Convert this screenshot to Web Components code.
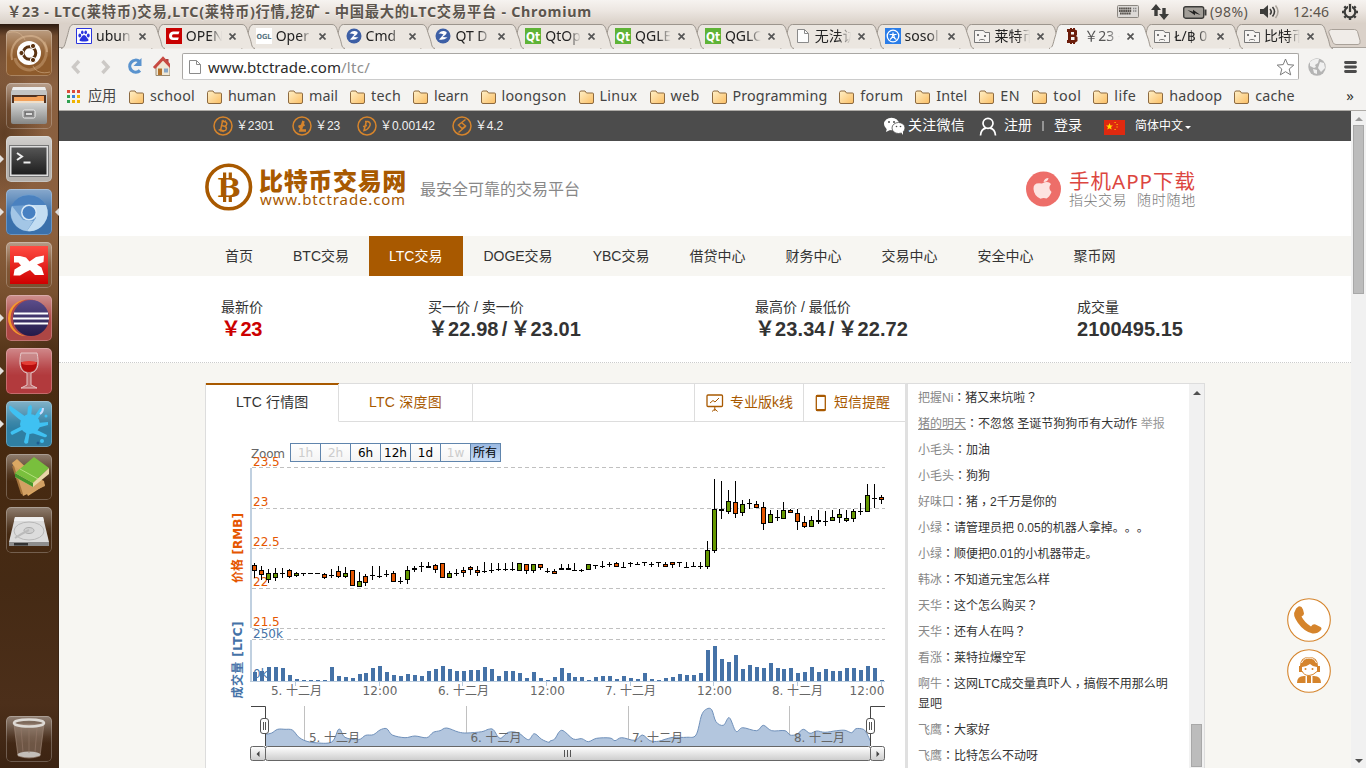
<!DOCTYPE html>
<html lang="zh-CN">
<head>
<meta charset="utf-8">
<title>LTC(莱特币)交易</title>
<style>
html,body{margin:0;height:100%;overflow:hidden}
body{font-family:"Liberation Sans","Noto Sans CJK SC",sans-serif;font-size:14px;color:#333;text-spacing-trim:space-all}
</style>
</head>
<body>
<desktop-shell></desktop-shell>
<script>
class Base extends HTMLElement{
  constructor(){super();this.attachShadow({mode:'open'});}
  connectedCallback(){
    this.shadowRoot.innerHTML='<style>*{box-sizing:border-box}svg{display:block;flex:none}:host{display:block;box-sizing:border-box}'+this.css()+'</style>'+this.html();
    this.ready();
  }
  css(){return ''} html(){return '<slot></slot>'} ready(){}
}
const UI='font-family:"Noto Sans","Noto Sans CJK SC",sans-serif;';

/* Text that spreads its letters over a given width: <fit-text w="90"> */
class FitText extends Base{
  css(){return ':host{display:inline-block;white-space:pre;flex:none;width:'+this.getAttribute('w')+'px}span{display:inline-block;white-space:pre}'}
  html(){return '<span><slot></slot></span>'}
  ready(){
    const s=this.shadowRoot.querySelector('span'),n=[...this.textContent].length,w=+this.getAttribute('w');
    s.style.letterSpacing=((w-s.getBoundingClientRect().width)/n).toFixed(3)+'px';
  }
}
customElements.define('fit-text',FitText);

/* ---------- desktop panel ---------- */
class TopPanel extends Base{
  css(){return `:host{height:24px;display:flex;align-items:center;background:linear-gradient(#f6f3f0,#ece6e1 45%,#d9d0c7);color:#5c554d;${UI}line-height:24px;padding:0 8px 0 7px}
  .t{font-weight:700;font-size:14.3px;flex:1;text-shadow:0 1px #fff8}.r{font-size:14px}svg{position:relative}`}
  html(){return `<div class="t"><fit-text w="585">￥23 - LTC(莱特币)交易,LTC(莱特币)行情,挖矿 - 中国最大的LTC交易平台 - Chromium</fit-text></div>
  <svg width="22" height="14" style="margin-right:12px"><rect x=".5" y=".5" width="21" height="12" rx="1" fill="#dcd9d6" stroke="#8b8781"/><path d="M2 3.500h12.500M2 6h12.500M3 8.500h11" stroke="#56524d" stroke-width="2" stroke-dasharray="1.7 .4"/><path d="M16 3.500h4M16 6h4" stroke="#888" stroke-width="1.700" stroke-dasharray="1.2 .6"/></svg>
  <svg width="18" height="18" style="margin-right:14px" fill="#3c3c3a"><path d="M5 1l5 6H6.700v6H3.300V7H0zM13 17l-5-6h3.300V5h3.400v6H18z"/></svg>
  <svg width="24" height="13" style="margin-right:3px"><rect x=".7" y=".7" width="20" height="11.500" rx="2" fill="#a29e98" stroke="#3c3c3a" stroke-width="1.400"/><path d="M21.500 3.500h2v6h-2z" fill="#3c3c3a"/><path d="M4.500 4l5.500 1.700V3.800L17.500 9l-5.500-1.700v1.900z" fill="#222"/></svg>
  <fit-text class="r" w="38">(98%)</fit-text>
  <svg width="20" height="16" style="margin:0 13px 0 12px"><path d="M0 5h3.500L8 1v13L3.500 10H0z" fill="#3c3c3a"/><path d="M10 5q2.500 2.800 0 5.500M12.500 3q4 4.500 0 9.500" fill="none" stroke="#3c3c3a" stroke-width="1.600"/><path d="M15.500 1.500q5 6 0 12.500" fill="none" stroke="#aaa49c" stroke-width="1.600"/></svg>
  <fit-text class="r" w="36">12:46</fit-text>
  <svg width="18" height="18" style="margin:0 -1px 0 12px" viewBox="-9 -9 18 18"><circle r="5.300" fill="none" stroke="#3c3c3a" stroke-width="2.200"/><path d="M5 0H8M-5 0H-8M0 5V8M3.500 3.500l2.200 2.200M-3.500 3.500l-2.200 2.200M3.700-3.700l2-2M-3.700-3.700l-2-2" stroke="#3c3c3a" stroke-width="2.400"/><path d="M-2-9h4V1h-4z" fill="#e6e0d9"/><path d="M0-8V0" stroke="#3c3c3a" stroke-width="2.200"/></svg>`}
}
customElements.define('top-panel',TopPanel);

/* ---------- launcher ---------- */
const LICONS={
dash:`<path d="M6 30C3 15 13 5 26 6c10 1 15 10 15 16" fill="none" stroke="#e0bd99" stroke-width="2" opacity=".55"/><path d="M38 12c6 12 0 26-14 28-8 0-14-6-15-12" fill="none" stroke="#dab48d" stroke-width="3" opacity=".4"/><path d="M2 3c7-3 14 0 17 7M44 42c-8 2-14 0-17-6" fill="none" stroke="#e0bd99" opacity=".5"/><circle cx="23" cy="23" r="12" fill="#fff"/><circle cx="23.500" cy="23" r="6.300" fill="none" stroke="#5b3413" stroke-width="3"/><g fill="#5b3413" stroke="#fff" stroke-width="1"><circle cx="15.500" cy="23" r="2.600"/><circle cx="27" cy="16" r="2.600"/><circle cx="27" cy="30" r="2.600"/></g>`,
files:`<path d="M7 4h32l2 5v14H5V9z" fill="#c3c4c3"/><path d="M7 4h32l1 3H6z" fill="#eee"/><path d="M6 12h34v9H6z" fill="#503221"/><path d="M8 14h22l2-1h6v8H8z" fill="#f3a15a"/><path d="M8 18h30v3H8z" fill="#f0dfc9"/><path d="M5 20h36v19q0 2-2 2H7q-2 0-2-2z" fill="url(#gm)"/><rect x="17" y="27" width="12" height="8" rx="1.500" fill="#888" stroke="#eee"/><rect x="19.500" y="29.500" width="7" height="3" fill="#ddd" stroke="#666" stroke-width=".7"/>`,
term:`<rect x="3.500" y="9.500" width="39" height="31" fill="#ddd" stroke="#777"/><rect x="5.500" y="11.500" width="35" height="27" fill="url(#gk)"/><path d="M11 17l5 3.500-5 3.500" fill="none" stroke="#eee" stroke-width="2"/><path d="M17.500 26.500h7" stroke="#eee" stroke-width="2"/>`,
chromium:`<circle cx="23" cy="24" r="18.500" fill="#6f9fd0"/><path d="M23 16h17a18.500 18.500 0 0 1-19 26l9-13z" fill="#c3ddf2"/><path d="M6 17a18.500 18.500 0 0 0 15 25l6-10-10-1z" fill="#a3c6e6"/><path d="M5 17a20 20 0 0 1 35-1H23z" fill="#4a81bf"/><circle cx="23" cy="23.500" r="8" fill="#d8e9f7"/><circle cx="23" cy="23.500" r="6.500" fill="#4780c2"/>`,
xmind:`<path d="M4 4h38v38H4z" fill="url(#gr)"/><path d="M8 14h6l6 1.500 3.500 4L30 15l8-1.500-.5 6.500-6.500 2.500 4.500 3L38 33h-9l-5-5-5 2.500-5 3H7.500l1-6 6.500-4-2.500-3H8z" fill="#fff"/>`,
eclipse:`<circle cx="20" cy="23" r="18" fill="#f79a2a"/><circle cx="23" cy="23" r="18.500" fill="#b5494a"/><circle cx="25" cy="23" r="18" fill="url(#gv)"/><path d="M8 18.500h34M7 23.500h36M8 28.500h34" stroke="#fff" stroke-width="2"/>`,
wine:`<path d="M15 5h16c2 9 2 18-6 20v12l6 3H15l6-3V25c-8-2-8-11-6-20z" fill="#cda0a0" fill-opacity=".5" stroke="#e6c7c7"/><path d="M15 14q8 4 16 0c0 6-2 10-8 10s-8-4-8-10z" fill="#b50d0d"/><ellipse cx="23" cy="15" rx="7.500" ry="2" fill="#e33c34"/>`,
splash:`<g fill="#3fc1f2"><circle cx="24" cy="23" r="10"/><path d="M20 16L6 6q-3-3-3 1 0 4 14 14zM21 16l1-10q3-4 4 0l-1 10zM28 16l6-9q4-1 3 3l-6 9zM31 22l11-1v3l-11 3zM29 28l12 6q0 3-3 2L26 32zM24 30l-2 12q-3 2-4-1l3-12zM18 28L6 34q-3-3 0-4l10-5z"/><circle cx="40" cy="15" r="1.500"/><circle cx="36" cy="40" r="2"/></g><path d="M34 13q3-2 3-6" stroke="#cdf" stroke-width="2" fill="none"/><circle cx="32" cy="42" r="1.500" fill="#1d5d92"/>`,
books:`<path d="M6 9l5-4 28 26-17 11z" fill="#dba863"/><path d="M7 12l10 30 22-10-1-5z" fill="#d2a063"/><path d="M7 12l9 28" stroke="#a4733c" stroke-width="2"/><path d="M28 3l15 11-16 15L9 19z" fill="#79bf3d"/><path d="M9 19l18 10 16-15v6L27 33 9 23z" fill="#ead7a6"/><path d="M9 19l18 10v4L9 23z" fill="#45962a"/><path d="M14 15l18 10" stroke="#b3e07c"/>`,
disk:`<path d="M9 10h28l6 25H3z" fill="#dcdcdc"/><path d="M9 10h28l1 4H8z" fill="#eee"/><ellipse cx="23" cy="24" rx="15" ry="9" fill="none" stroke="#b8b8b8"/><ellipse cx="23" cy="23.500" rx="5" ry="3" fill="#d0d0d0" stroke="#aaa"/><path d="M9 31q6-4 14-8" stroke="#bbb" fill="none" stroke-width="2"/><path d="M3 35h40v4H3z" fill="#8e8e8e"/><path d="M8 36h14v2.500H8z" fill="#333"/>`,
trash:`<path d="M8 8l4 32q11 4 22 0l4-32z" fill="#c4aea0" fill-opacity=".35" stroke="#a28b7c" stroke-width=".6"/><ellipse cx="23" cy="7" rx="15" ry="3.500" fill="none" stroke="#dedad5" stroke-width="2.500"/><ellipse cx="23" cy="38.500" rx="11.500" ry="3" fill="#c4bfba"/><path d="M15 12l2 24M23 12v25M31 12l-2 24" stroke="#96796a" stroke-width=".6"/>`
};
class LauncherIcon extends Base{
  css(){return `:host{width:46px;height:46px;border-radius:5px;position:relative;background:linear-gradient(#fff6,#fff1 45%,#0000 60%),${this.getAttribute('bg')||'#0000'};box-shadow:inset 0 0 0 1px #ffffff40}
  i{position:absolute;top:19px;border:4px solid transparent}.l{left:-6px;border-left-color:#e4e0dc;border-right:0}.r{right:-7px;border-right-color:#ddd;border-left:0}`}
  html(){return `<svg width="46" height="46"><defs><linearGradient id="gm" x2="0" y2="1"><stop stop-color="#d4d5d4"/><stop offset="1" stop-color="#868786"/></linearGradient><linearGradient id="gk" x2="0" y2="1"><stop stop-color="#555"/><stop offset="1" stop-color="#1e1e1e"/></linearGradient><linearGradient id="gr" x2="0" y2="1"><stop stop-color="#ff4c42"/><stop offset="1" stop-color="#cf0000"/></linearGradient><linearGradient id="gv" x2="0" y2="1"><stop stop-color="#5b4d8a"/><stop offset="1" stop-color="#231a49"/></linearGradient></defs>${LICONS[this.getAttribute('kind')]}</svg>${this.hasAttribute('run')?'<i class="l"></i>':''}${this.hasAttribute('focus')?'<i class="r"></i>':''}`}
}
customElements.define('launcher-icon',LauncherIcon);
class LauncherBar extends Base{
  css(){return `:host{width:59px;display:flex;flex-direction:column;align-items:flex-start;gap:7px;padding:6px 0 6px 6px;border-right:1px solid #3a2515;
  background:radial-gradient(ellipse 40px 70px at 4px 110px,#3a220f88,#0000),radial-gradient(ellipse 30px 60px at 50px 330px,#3a220f66,#0000),linear-gradient(#2c1b10,#6f4a2e 12px,#8a6040 60px,#8b5f3d 210px,#78502f 270px,#553519 330px,#47290f 390px,#452a14 560px,#4c2f1a 680px,#3b2312)}
  launcher-icon:last-child{margin-top:auto}`}
  html(){return `<launcher-icon kind="dash" bg="#8e5b2c"></launcher-icon><launcher-icon kind="files"></launcher-icon><launcher-icon kind="term" bg="#b5b2ae" run></launcher-icon><launcher-icon kind="chromium" bg="#3a70ab" run focus></launcher-icon><launcher-icon kind="xmind"></launcher-icon><launcher-icon kind="eclipse" bg="#ad4644" run></launcher-icon><launcher-icon kind="wine" bg="#b23a3d" run></launcher-icon><launcher-icon kind="splash" bg="#2f7fa3" run></launcher-icon><launcher-icon kind="books"></launcher-icon><launcher-icon kind="disk"></launcher-icon><launcher-icon kind="trash"></launcher-icon>`}
}
customElements.define('launcher-bar',LauncherBar);

/* ---------- browser chrome ---------- */
const bt='font-family="DejaVu Sans" font-weight="bold"';
const FAV={
baidu:`<path d="M.5.5h15v15H.5z" fill="#fff" stroke="#2a35dd"/><g fill="#2a35dd"><ellipse cx="3.800" cy="7.500" rx="1.400" ry="1.900"/><ellipse cx="6.300" cy="4.300" rx="1.300" ry="1.900"/><ellipse cx="9.700" cy="4.300" rx="1.300" ry="1.900"/><ellipse cx="12.300" cy="7.500" rx="1.400" ry="1.900"/><path d="M8 7c2 0 2.500 2.500 4 4s0 3-4 2.500C4 14 2.500 12.500 4 11s2-4 4-4z"/></g>`,
csdn:`<path d="M0 0h16v16H0z" fill="#c80000"/><path d="M13.500 3.500H7Q3 4 3 8t4 4h5l.8-2.500H7.500Q6 9.500 6 8t1.500-1.800h5z" fill="#fff"/>`,
ogl:`<path d="M0 0h16v16H0z" fill="#fff"/><text x=".5" y="10.500" textLength="15" lengthAdjust="spacingAndGlyphs" font-size="7" ${bt} fill="#5b7784">OGL</text>`,
cn:`<circle cx="8" cy="8" r="7.500" fill="#3d5fa5"/><path d="M3.500 5.500q4-4 8-1.500 1 2-4 5 3 0 5 .5-4 3-8.500 2 1-1 4.500-5-2-1.200-5-1z" fill="#fff"/>`,
qt:`<path d="M0 0h16v16H0z" fill="#5fb336"/><text x="1" y="12.500" textLength="14" lengthAdjust="spacingAndGlyphs" font-size="12.500" ${bt} fill="#fff">Qt</text>`,
page:`<path d="M2.500 1.500h7l4 4v9h-11z" fill="#fdfdfd" stroke="#8a8a8a"/><path d="M9.500 1.500v4h4" fill="none" stroke="#8a8a8a"/>`,
soso:`<path d="M0 0h16v16H0z" fill="#2b7de8"/><circle cx="8" cy="8" r="5.800" fill="none" stroke="#fff" stroke-width="1.300"/><path d="M4.500 6.500h7M8 4.500v2q-.5 3.500-3 5M9 6.500q-.5 4 2.500 5M7 9.500h3" stroke="#fff" fill="none" stroke-width="1.200"/>`,
sad:`<path d="M.5 2.500h9l1.500 2h4.500v10H.5z" fill="#f6f4f2" stroke="#777"/><path d="M3 6l2 2m0-2L3 8M10 7l2 2m0-2l-2 2M5 12.500l1.500-1h3l1.500 1" stroke="#777" fill="none"/>`,
coin:`<path d="M3 1h3V0h2v1h1V0h2v1.500l2 1V7l-1 1 1.500 1v4l-2 1.500H11V16H9v-1H8v1H6v-1H3v-3h1V4H3zM7 4v2.500h3V4zM7 9v3h3.500V9z" fill="#6b1d0b" fill-rule="evenodd"/>`
};
class BrowserTab extends Base{
  css(){const a=this.hasAttribute('active');return `:host{width:89.85px;flex:none;position:relative;height:24px;${a?'z-index:30;':''}}
  .bg{position:absolute;left:0;top:0;overflow:visible}.in{position:relative;display:flex;align-items:center;height:24px;padding-left:15px}
  .t{margin-left:4px;width:36px;overflow:hidden;white-space:nowrap;${UI}font-size:14px;line-height:22px;color:${a?'#555':'#222'};-webkit-mask:linear-gradient(90deg,#000 65%,#0000);margin-right:7px}`}
  html(){const a=this.hasAttribute('active');return `<svg class="bg" width="104" height="25"><path d="M0 24.500C4 24 4 19 6 13S8 .5 12.500.5H91C96 .5 96 7 98.500 13S100 24 104 24.500" fill="${a?'#f4f3f1':'#ebe6e0'}" stroke="#9c958d"/>${a?'<path d="M1 24.500h102" stroke="#f4f3f1" stroke-width="2"/>':''}</svg>
  <div class="in"><svg width="16" height="16">${FAV[this.getAttribute('fav')]}</svg><div class="t"><slot></slot></div><svg width="7" height="7"><path d="M.5.500l6 6m0-6l-6 6" stroke="#555" stroke-width="1.700"/></svg></div>`}
}
customElements.define('browser-tab',BrowserTab);
class TabStrip extends Base{
  css(){return `:host{height:24px;display:flex;padding-left:2px;background:#dad1c9;border-bottom:1px solid #aaa49d}.new{margin:5px 0 0 9px}`}
  html(){const T=[['baidu','ubun'],['csdn','OPEN'],['ogl','Oper'],['cn','Cmd'],['cn','QT D'],['qt','QtOp'],['qt','QGLE'],['qt','QGLC'],['page','无法访'],['soso','sosol'],['sad','莱特币'],['coin','￥23 -'],['sad','Ł/฿ 0'],['sad','比特币']];
  return T.map((t,i)=>`<browser-tab fav="${t[0]}" style="z-index:${i==11?30:20-i}" ${i==11?'active':''}>${t[1]}</browser-tab>`).join('')+
  `<svg class="new" width="33" height="16"><path d="M3.500.5h23q2 0 3 2l2.500 9q1 4-2 4H8q-2 0-3-2L1 4q-1-3 2.500-3.500z" fill="#f0ece8" stroke="#a9a199"/></svg>`}
}
customElements.define('tab-strip',TabStrip);
class ToolBar extends Base{
  css(){return `:host{height:35px;background:#f4f3f1;display:flex;align-items:center;padding:2px 8px 0 11px;position:relative}
  .url{display:flex;flex:none;align-items:center;height:27px;width:1117px;background:#fff;border:1px solid #a9a7a4;border-bottom-color:#ccc;border-radius:2px;${UI}font-size:15px;line-height:24px;color:#2b2b2b;padding:0 3px 0 4px}
  .url div{flex:1;margin-left:5px}.g{color:#8e8e8e}`}
  html(){return `<svg width="100" height="24" style="margin:0 12px 0 0"><path d="M9 6L3.500 12 9 18M32.500 6L38 12l-5.500 6" fill="none" stroke="#ccc9c6" stroke-width="3.400"/><path d="M69.500 6.500a6 6 0 1 0 .5 9" fill="none" stroke="#5a93ce" stroke-width="3.200"/><path d="M71.500 3v8h-8z" fill="#5a93ce"/><path d="M86 11v9.500h14V11l-7-6z" fill="#efe7d6" stroke="#9b8b72"/><path d="M96 4h2.500v5H96z" fill="#a44"/><path d="M84 13l9-9.500 9 9.500" fill="none" stroke="#c84a42" stroke-width="3"/><path d="M88 13.500h4V20h-4z" fill="#b2722c"/><path d="M94 13.500h4v4h-4z" fill="#86a6c8"/></svg>
  <div class="url"><svg width="16" height="16">${FAV.page}</svg><div><fit-text w="133">www.btctrade.com</fit-text><fit-text class="g" w="29">/ltc/</fit-text></div><svg width="19" height="18"><path d="M9.500 1l2.300 5.600 6 .5-4.600 3.900 1.500 5.900-5.200-3.200-5.200 3.200 1.500-5.900L1.200 7.100l6-.5z" fill="#fff" stroke="#7b7b7b" stroke-linejoin="round"/></svg></div>
  <svg width="20" height="20" style="margin-left:8px"><circle cx="10" cy="10" r="8.700" fill="#b4b4b4"/><path d="M3 5q4-4 9-3l-1 4-3 2 1 2-2 1-4-2zM13 5l4 1 1 5-4 4-3-4zM6 12l4 1 0 4-3-1z" fill="#f0f0f0"/></svg>
  <svg width="14" height="14" style="margin-left:17px"><path d="M1.500 2.500h10M1.500 7h10M1.500 11.500h10" stroke="#4b4b4b" stroke-width="2.800" stroke-linecap="round"/></svg>`}
}
customElements.define('tool-bar',ToolBar);
class BookmarkBar extends Base{
  css(){return `:host{height:28px;background:#f4f3f1;border-bottom:1px solid #aeaba7;display:flex;align-items:center;gap:12px;padding:0 12px 0 8px;${UI}font-size:14.300px;line-height:26px;color:#444}
  fit-text{margin-top:-2px}div{display:flex;align-items:center;gap:6px}.apps{gap:8px;margin-right:1px}.more{margin-left:auto;font-size:15px;color:#333;margin-top:-3px}`}
  html(){const B=[['school',45],['human',48],['mail',29],['tech',30],['learn',34.5],['loongson',65],['Linux',38],['web',29],['Programming',94.8],['forum',43],['Intel',31],['EN',20],['tool',28],['life',22],['hadoop',53],['cache',39.500]];
  const c=['#dd4b39','#dd4b39','#dd4b39','#2fa04f','#3c7ddc','#f0b400','#2fa04f','#f0b400','#f0b400'];
  return `<div class="apps"><svg width="13" height="13">${c.map((k,i)=>`<path d="M${i%3*5} ${(i/3|0)*5}h3v3h-3z" fill="${k}"/>`).join('')}</svg><fit-text w="28">应用</fit-text></div>`+
  B.map(b=>`<div><svg width="15" height="14"><defs><linearGradient id="f" x2="1" y2="1"><stop stop-color="#fff0c8"/><stop offset="1" stop-color="#fbbe63"/></linearGradient></defs><path d="M.5 12V2.500l1-1.500h4.500l1.500 2h6q1 0 1 1v8q0 1.500-1.500 1.500H2Q.5 13.500.500 12z" fill="url(#f)" stroke="#8d6a40"/></svg><fit-text w="${b[1]}">${b[0]}</fit-text></div>`).join('')+`<span class="more">»</span>`}
}
customElements.define('bookmark-bar',BookmarkBar);

/* ---------- site ---------- */
class CoinPrice extends Base{
  css(){return `:host{display:flex;align-items:center;gap:3px;color:#f2f2f2;font-size:12px;line-height:30px}`}
  html(){const g={b:'<g transform="rotate(12 10 10)"><path d="M7.500 5.500h3.500q2.300 0 2.300 2.200T11 9.900H8.500h3q2.400 0 2.400 2.300T11.500 14.500H6.500M8.500 5.500v9M9 4v1.500M11.200 4v1.500M9 14.500V16M11.200 14.500V16"/></g>',l:'<path d="M11.500 5l-3 9.500h5.500M6.500 11l6-2.500" stroke-width="2.600"/>',d:'<path d="M8 5.500l3 0q3.500 1.500 1.500 5T7 14.500l2.300-9M6 10.500l4-1"/>',y:'<path d="M13.500 3.500L6.500 9l3.500 3.500 3.500-2.500L10 7M6.500 16.500L13.500 10.500" stroke-width="1.500"/>'}[this.getAttribute('coin')];
  return `<svg width="20" height="20" fill="none" stroke="#d5842c" stroke-width="1.500"><circle cx="10" cy="10" r="9"/>${g}</svg><fit-text w="${this.getAttribute('w')}">${this.textContent}</fit-text>`}
}
customElements.define('coin-price',CoinPrice);
class SiteTopbar extends Base{
  css(){return `:host{height:30px;background:#4c4c4c;color:#fff}.w{width:1000px;margin:0 auto;height:30px;display:flex;align-items:center;line-height:27px;padding:0 14px 0 8px}
  coin-price{margin-right:17px}.sp{flex:1}.u{position:relative;top:-1px}.s{font-size:12px;line-height:30px}`}
  html(){return `<div class="w"><coin-price coin="b" w="38" style="margin-right:18px">￥2301</coin-price><coin-price coin="l" w="25">￥23</coin-price><coin-price coin="d" w="55">￥0.00142</coin-price><coin-price coin="y" w="28">￥4.2</coin-price><div class="sp"></div>
  <svg width="21" height="18" style="margin-right:3px"><ellipse cx="7.500" cy="7" rx="7.500" ry="6.300" fill="#fff"/><path d="M3 11l-1 4 4-2z" fill="#fff"/><ellipse cx="14.500" cy="11" rx="6.500" ry="5.500" fill="#fff" stroke="#4c4c4c" stroke-width=".8"/><path d="M17 15l2 3v-4z" fill="#fff"/><g fill="#4c4c4c"><circle cx="5" cy="5" r="1"/><circle cx="10" cy="5" r="1"/><circle cx="12.500" cy="9.500" r=".8"/><circle cx="16.500" cy="9.500" r=".8"/></g></svg>
  <fit-text class="u" w="57">关注微信</fit-text><svg width="18" height="19" style="margin:0 7px 0 14px" fill="none" stroke="#fff" stroke-width="1.700"><circle cx="9" cy="6.300" r="5"/><path d="M1.500 18.500Q2 12 7 11.200M16.500 18.500Q16 12 11 11.200"/></svg><span class="u">注册</span><svg width="2" height="10" style="margin:0 10px"><path d="M1 0v10" stroke="#ddd"/></svg><span class="u">登录</span>
  <svg width="21" height="15" style="margin:2px 10px 0 22px"><path d="M0 0h21v15H0z" fill="#de2910"/><path d="M5.500 3l1 2.400 2.500.100-2 1.600.700 2.500-2.200-1.400-2.200 1.400.7-2.500-2-1.600 2.500-.100z" fill="#ffde00"/><path d="M10.500 2.500h1.200M12.500 4.500h1.200M12.500 7h1.200M10.500 9.500h1.200" stroke="#ffc400" stroke-width="1.200"/></svg>
  <span class="s">简体中文</span><svg width="6" height="4" style="margin:3px 0 0 2px"><path d="M0 0h6L3 3z" fill="#fff"/></svg></div>`}
}
customElements.define('site-topbar',SiteTopbar);
class SiteHeader extends Base{
  css(){return `:host{height:95px;background:#fff}.w{width:1000px;height:95px;margin:0 auto;display:flex;align-items:center;padding:0 9px 0 0}
  .logo{margin-top:-4px}.n{margin:-4px 0 0 6px;color:#a85900;padding-top:1px}.n b{display:block;font:900 24px/28px "Noto Sans CJK SC",sans-serif;height:25px}.n span{display:block;font:15px/16px "Noto Sans","Noto Sans CJK SC",sans-serif;height:18px;padding-left:1px}
  .tag{margin-left:13px;font-size:16px;color:#888;flex:1;margin-top:-1px}.ph{margin-top:1px}.app{margin-left:8px;font-family:"Noto Sans","Noto Sans CJK SC",sans-serif}.app b{display:block;font-weight:400;font-size:20.5px;line-height:24px;height:21px;margin-top:1px;color:#dc463f}.app span{display:flex;justify-content:space-between;width:127px;font-size:14px;line-height:20px;color:#777;font-weight:300}`}
  html(){return `<div class="w"><svg class="logo" width="48" height="48"><circle cx="23.700" cy="24" r="21.800" fill="none" stroke="#a85900" stroke-width="3.600"/><g fill="#a85900"><text x="12" y="33.500" font-family="DejaVu Serif" font-weight="bold" font-size="26" textLength="24" lengthAdjust="spacingAndGlyphs">B</text><path d="M18 9.500h3.200v6H18zM23.700 9.500h3.200v6h-3.200zM18 33h3.200v6H18zM23.700 33h3.200v6h-3.200z"/></g></svg>
  <div class="n"><b><fit-text w="148">比特币交易网</fit-text></b><span><fit-text w="146">www.btctrade.com</fit-text></span></div><div class="tag">最安全可靠的交易平台</div>
  <svg class="ph" width="36" height="36"><circle cx="18.500" cy="18" r="17.500" fill="#ed6e69"/><path d="M17 12.500q6-3 9 .5-3.500 4 .5 8-2 5-5 6.500-3-1-6 .2Q9 25 8.500 18t8.500-5.500zM18.500 11q1-4 5-4-.5 4-5 4z" fill="#fde3e0"/></svg>
  <div class="app"><b><fit-text w="127">手机APP下载</fit-text></b><span><fit-text w="58">指尖交易</fit-text><fit-text w="59">随时随地</fit-text></span></div></div>`}
}
customElements.define('site-header',SiteHeader);
class SiteNav extends Base{
  css(){return `:host{height:40px;background:#f7f6f2}.w{width:1000px;margin:0 auto;display:flex;line-height:40px}.w span{padding:0 20px}.w .on{background:#a85900;color:#fff;width:94.400px}`}
  html(){return `<div class="w">${['首页','BTC交易','LTC交易','DOGE交易','YBC交易','借贷中心','财务中心','交易中心','安全中心','聚币网'].map((t,i)=>`<span class="${i==2?'on':''}">${t}</span>`).join('')}</div>`}
}
customElements.define('site-nav',SiteNav);
class StatItem extends Base{
  css(){return `:host{width:var(--w)}.l{line-height:20px;height:21px}.v{font-weight:700;font-size:20px;line-height:22px;color:var(--c,#333);white-space:pre;word-spacing:-2.5px}`}
  html(){const v=this.getAttribute('value'),w=this.getAttribute('vw');return `<div class="l">${this.getAttribute('label')}</div><div class="v"><fit-text w="${w}">${v}</fit-text></div>`}
}
customElements.define('stat-item',StatItem);
class SiteStats extends Base{
  css(){return `:host{height:87px;background:#fff;border-bottom:1px dotted #ccc}.w{width:1000px;margin:0 auto;display:flex;padding:21px 0 0 16px}`}
  html(){return `<div class="w"><stat-item style="--w:207px;--c:#c00" label="最新价" value="￥23" vw="41"></stat-item><stat-item style="--w:327px" label="买一价 / 卖一价" value="￥22.98 / ￥23.01" vw="153"></stat-item><stat-item style="--w:322px" label="最高价 / 最低价" value="￥23.34 / ￥22.72" vw="153"></stat-item><stat-item style="--w:110px" label="成交量" value="2100495.15" vw="106"></stat-item></div>`}
}
customElements.define('site-stats',SiteStats);

/* ---------- chart ---------- */
const VOL=[291,288,276,276,279,300,312,316,316,316,315,276,303,306,309,297,294,279,273,291,300,303,297,300,303,288,282,273,282,288,288,285,285,276,282,303,288,288,294,309,291,309,316,306,279,294,306,306,315,306,303,303,312,303,309,312,294,312,315,309,306,297,300,300,294,225,213,252,261,240,282,270,276,279,264,279,282,279,294,291,276,291,282,288,288,279,279,285,273,279,315];
/* high, body top, body bottom, low, colour (r falling, g rising, k flat) */
const CAN=`563 565 571 578 r|566 570 575 580 r|569 573 580 583 g|568 573 578 581 g|568 573 574 578 k|569 570 577 578 r|572 573 576 577 g|573 573 574 576 k|573 573 574 574 k|573 573 574 574 k|573 574 578 579 r|569 575 576 578 k|566 571 577 578 r|567 573 577 578 g|570 570 586 586 r|572 581 587 587 g|574 576 583 586 r|566 575 576 580 k|566 576 577 578 k|570 574 575 577 k|571 573 582 582 r|577 581 582 584 k|566 570 580 584 g|566 568 570 572 g|562 566 567 572 k|562 566 568 568 r|564 565 570 573 r|563 563 578 578 r|571 573 578 578 g|569 573 574 576 k|567 570 573 577 r|566 567 570 575 r|566 570 573 576 r|562 571 572 573 k|563 570 571 573 k|563 569 571 571 k|563 569 571 571 k|562 569 571 571 k|563 563 571 571 g|564 564 571 574 r|564 564 571 573 g|564 564 568 570 r|568 571 572 573 k|569 571 574 574 r|564 568 570 570 g|564 568 570 570 r|563 570 571 571 k|569 570 571 572 k|564 564 570 570 g|565 565 566 569 k|561 566 567 568 k|562 564 565 567 k|562 563 567 567 r|562 567 568 568 k|562 563 564 567 k|562 564 565 565 k|562 562 563 566 k|562 564 565 567 k|562 562 563 567 k|562 564 567 567 r|562 562 565 568 r|562 562 563 567 k|562 567 568 568 k|562 566 567 567 k|562 566 567 569 k|541 550 567 569 g|479 509 551 553 g|481 509 511 519 r|490 501 512 514 g|481 502 514 518 r|500 504 513 516 g|499 503 504 509 k|501 504 508 508 r|502 507 524 530 r|510 514 523 523 g|510 517 518 521 k|502 510 519 519 g|509 510 513 513 r|509 513 522 530 r|516 522 527 528 r|516 520 527 527 g|510 520 522 524 r|511 521 522 526 k|510 517 521 521 g|509 514 518 523 g|510 518 521 522 g|509 511 519 522 g|503 511 512 515 k|484 495 512 512 g|484 498 499 508 k|495 497 500 504 r`.split('|').map(s=>s.split(' '));
const N1=[212,478,230,474,248,463,270,463,292,465,310,485,330,497,360,503,410,501,432,462,450,487,490,494,512,481,535,479,555,465,575,461,592,480,630,488,660,483,695,488,715,472,735,467,755,459,790,471,815,474,860,470,880,463,895,464,915,490,940,472,970,474,1000,494,1018,476,1040,493,1062,502];
const N2=[0,498,14,492,35,466,70,492,95,491,115,500,140,490,180,489,195,497,215,488,255,496,277,480,300,497,325,499,345,493,370,487,410,487,438,480,455,420,470,402,485,404,498,440,520,451,538,428,558,469,578,458,620,467,640,451,665,467,705,467,720,480,740,478,760,463,780,475,800,468,825,472,860,467,885,466,905,473,918,461,940,463,950,475,962,500];
class StockChart extends Base{
  css(){return `svg{overflow:hidden}text{font-family:"DejaVu Sans","Noto Sans CJK SC",sans-serif;font-size:12px}`}
  html(){
    let s='';const T=(x,y,t,c,w,ex='')=>`<text x="${x}" y="${y}" fill="${c}" ${w?`textLength="${w}"`:''} ${ex}>${t}</text>`;
    s+=T(251,457.5,'Zoom','#666',34);
    s+=`<path d="M252 467.500H885M252 508.500H885M252 548.500H885M252 588.500H885M252 628.500H885M252 639.500H885" stroke="#c0c0c0" stroke-dasharray="4 3"/><path d="M251 468V628M251 640V681" stroke="#c0d0e0" stroke-width="2"/>`;
    ['1h','2h','6h','12h','1d','1w','所有'].forEach((t,i)=>{const off=[0,1,5].includes(i);s+=`<rect x="${290.5+i*30}" y="443.500" width="30" height="18" fill="url(#${i==6?'ga':'gb'})" stroke="#6085ad"/>`+`<text x="${i==6?485:305.5+i*30}" y="457" text-anchor="middle" fill="${off?'#ccc':'#000'}">${t}</text>`});
    [[466,'23.5'],[506,'23'],[546,'22.5'],[586,'22'],[626,'21.5']].forEach(a=>s+=T(253,a[0],a[1],'#e55600'));
    s+=T(253,638,'250k','#4572a7')+T(253,678,'0k','#4572a7');
    s+=`<text transform="translate(241.500 583) rotate(-90)" fill="#e55600" font-weight="bold" textLength="70">价格 [RMB]</text><text transform="translate(241.500 698.500) rotate(-90)" fill="#4572a7" font-weight="bold" textLength="77">成交量 [LTC]</text>`;
    CAN.forEach((c,i)=>{const x=Math.round(254+i*6.967)+.5,[h,a,b,l,k]=c;
      s+=`<path d="M${x} ${h}V${l}" stroke="#000"/>`;
      s+=k=='k'?`<path d="M${x-2.5} ${+a+.5}h5" stroke="#000"/>`:`<rect x="${x-2}" y="${+a+.5}" width="4" height="${Math.max(1,b-a-1)}" fill="${k=='r'?'#e55600':'#669900'}" stroke="#000"/>`;});
    VOL.forEach((v,i)=>{const h=Math.max(1,Math.round((318-v)/3));s+=`<rect x="${Math.round(253+i*6.967)}" y="${681-h}" width="4" height="${h}" fill="#4572a7"/>`});
    s+=`<path d="M250 681.500H885M295.500 682v4M379.500 682v4M462.500 682v4M546.500 682v4M630.500 682v4M713.500 682v4M797.500 682v4M881.500 682v4" stroke="#b9cbdd"/>`;
    [[271,'5. 十二月',51],[362.5,'12:00',35],[438,'6. 十二月',51],[530,'12:00',35],[605,'7. 十二月',51],[697,'12:00',35],[772,'8. 十二月',51],[849.5,'12:00',35]].forEach(a=>s+=T(a[0],695,a[1],'#666',a[2]));
    const P=[];for(let i=0;i<N1.length;i+=2)P.push([195+N1[i]/3,575+N1[i+1]/3]);for(let i=0;i<N2.length;i+=2)P.push([550+N2[i]/3,575+N2[i+1]/3]);
    let d=`M${P[0]}`;for(let i=0;i<P.length-1;i++){const p=P[Math.max(0,i-1)],q=P[i],r=P[i+1],t=P[Math.min(P.length-1,i+2)];d+=`C${[q[0]+(r[0]-p[0])/6,q[1]+(r[1]-p[1])/6,r[0]-(t[0]-q[0])/6,r[1]-(t[1]-q[1])/6].map(n=>n.toFixed(1))},${r.map(n=>n.toFixed(1))}`}
    s+=`<path d="M304.500 706v40M466.500 706v40M628.500 706v40M789.500 706v40" stroke="#c0c0c0"/><path d="${d}V746H265.700z" fill="#b3c6de"/><path d="${d}" fill="none" stroke="#6f90ba"/>`;
    [[309,5],[470.5,6],[632,7],[794,8]].forEach(a=>s+=T(a[0],742,a[1]+'. 十二月','#666',51));
    s+=`<path d="M251 706.500h14.500V746M885 706.500h-14.500V746" fill="none" stroke="#444"/>
    <g fill="#fff" stroke="#555"><rect x="260.500" y="718.500" width="8" height="15" rx="2.500"/><rect x="866.500" y="718.500" width="8" height="15" rx="2.500"/></g><path d="M263.500 722v8M265.500 722v8M869.500 722v8M871.500 722v8" stroke="#555"/>
    <g fill="url(#gs)" stroke="#666"><rect x="250.500" y="746.500" width="15" height="14" rx="2"/><rect x="265.500" y="746.500" width="605" height="14" rx="2"/><rect x="870.500" y="746.500" width="14" height="14" rx="2"/></g><path d="M259.500 751v6l-3-3zM876.500 751v6l3-3z" fill="#444"/><path d="M564.500 750v7M567.500 750v7M570.500 750v7" stroke="#555"/>`;
    return `<svg width="699" height="346" viewBox="206 422 699 346"><defs><linearGradient id="gb" x2="0" y2="1"><stop stop-color="#fff"/><stop offset="1" stop-color="#f4f4f4"/></linearGradient><linearGradient id="ga" x2="0" y2="1"><stop stop-color="#98b7e0"/><stop offset="1" stop-color="#c6dcf9"/></linearGradient><linearGradient id="gs" x2="0" y2="1"><stop stop-color="#fff"/><stop offset="1" stop-color="#ccc"/></linearGradient></defs>${s}</svg>`}
}
customElements.define('stock-chart',StockChart);
class ChartPanel extends Base{
  css(){return `:host{width:700px;background:#fff;border:1px solid #ddd;border-width:1px 0 0 1px}.tabs{display:flex;height:38px;line-height:36px;color:#a85900}
  .tabs>*{border-right:1px solid #ddd;border-bottom:1px solid #ddd;display:flex;align-items:center;padding-bottom:2px}.on{width:133px;color:#333;border-bottom-color:#fff!important;box-shadow:0 -1px #a85900,inset 0 1px #a85900;padding-left:30px}.d{width:134px;padding-left:30px}.sp{flex:1}.k{width:109px;padding-left:11px;gap:6px}.m{width:101px;padding-left:11px;gap:7px;border-right:0!important}.tabs svg{position:relative;top:1px}`}
  html(){return `<div class="tabs"><div class="on"><fit-text w="72.5">LTC 行情图</fit-text></div><div class="d"><fit-text w="73">LTC 深度图</fit-text></div><div class="sp"></div><div class="k"><svg width="18" height="18" fill="none" stroke="#a85900"><rect x="1" y="1" width="15.500" height="11.500" rx="1" stroke-width="1.300"/><path d="M4 9l3-2.500 2 1.500 4-4M8.800 13v4M6 17.500l2.800-2.500 2.800 2.500"/></svg><fit-text w="63">专业版k线</fit-text></div><div class="m"><svg width="12" height="18"><rect x="1.300" y="1.500" width="9" height="15" rx="1" fill="none" stroke="#a85900" stroke-width="1.300"/><path d="M1.300 2h9M1.300 16h9" stroke="#a85900" stroke-width="2"/></svg><span>短信提醒</span></div></div><stock-chart></stock-chart>`}
}
customElements.define('chart-panel',ChartPanel);
class ChatMessage extends Base{
  css(){return `:host{font-size:12px;line-height:20px;margin-bottom:6px}.u{color:#888}:host([link]) .u{text-decoration:underline}.c{font-family:"Noto Sans CJK TC",sans-serif;line-height:0}.low{position:relative;top:3px}.g{color:#999}`}
  html(){const p=t=>t.replace(/[，？]/g,m=>`<span class="c${m=='，'?' low':''}" lang="zh-Hant">${m}</span>`);return `<span class="u">${this.getAttribute('user')}</span><span class="c" lang="zh-Hant">：</span>${p(this.textContent)}${this.hasAttribute('link')?' <span class="g">举报</span>':''}`}
}
customElements.define('chat-message',ChatMessage);
class ChatPanel extends Base{
  css(){return `:host{width:300px;background:#fff;border-top:1px solid #ddd;border-left:3px solid #e0e0e0;border-right:1px solid #ddd;display:flex}.m{flex:1;padding:4px 14px 0 10px;white-space:normal}
  .s{width:15px;background:#f1f1f1;display:flex;flex-direction:column;align-items:center;padding-top:7px}.s i{width:11px;background:#bcbcbc;border:1px solid #a8a8a8;margin-top:329px;height:43px}`}
  html(){const M=[['把握Ni','猪又来坑啦？'],['猪的明天','不忽悠 圣诞节狗狗币有大动作'],['小毛头','加油'],['小毛头','狗狗'],['好味口','猪，2千万是你的'],['小绿','请管理员把 0.05的机器人拿掉。。。'],['小绿','顺便把0.01的小机器带走。'],['韩冰','不知道元宝怎么样'],['天华','这个怎么购买？'],['天华','还有人在吗？'],['看涨','莱特拉爆空军'],['啊牛','这网LTC成交量真吓人，搞假不用那么明显吧'],['飞鹰','大家好'],['飞鹰','比特怎么不动呀']];
  return `<div class="m">${M.map((m,i)=>`<chat-message user="${m[0]}" ${i==1?'link':''}>${m[1]}</chat-message>`).join('')}</div><div class="s"><svg width="8" height="4"><path d="M0 4h8L4 0z" fill="#505050"/></svg><i></i></div>`}
}
customElements.define('chat-panel',ChatPanel);
class ContactButtons extends Base{
  css(){return `:host{position:absolute;right:35px;top:598px;display:flex;flex-direction:column;gap:7px}`}
  html(){const r='<circle cx="22" cy="22" r="21.300" fill="#fff" stroke="#d5842c" stroke-width="1.100"/>';
  return `<svg width="44" height="44">${r}<path d="M11.500 8.500q3-1 4.500 3l1 4q0 2-2.500 3 3 6 9.500 10 2-3 4.500-2l5 2.500q2 1.500 0 3.500-3 3.500-8 3Q17 33.500 11 25T8 13q.5-3 3.500-4.500z" fill="#d5842c"/></svg>
  <svg width="44" height="44">${r}<g fill="#d5842c"><path d="M13 17q0-9 9-9t9 9h2v6h-3v-5q-4 0-7-3-4 3-8 3v5h-3v-6z"/><path d="M10 34q0-7 7-7h1.500v7zM34 34q0-7-7-7h-1.500v7zM20 27h4v7h-4z"/><circle cx="18.500" cy="20" r="1"/><circle cx="25.500" cy="20" r="1"/></g><path d="M14.500 14q2-5 7.500-5t7.500 5" stroke="#fff" fill="none"/><path d="M15 22q2 4.500 7 4.500 4 0 8-4" stroke="#d5842c" fill="none"/></svg>`}
}
customElements.define('contact-buttons',ContactButtons);
class PageScrollbar extends Base{
  css(){return `:host{width:15px;background:#f1f1f1;display:flex;flex-direction:column;align-items:center;padding:6px 0 5px}i{width:11px;height:169px;background:#bcbcbc;border:1px solid #a8a8a8;margin:4px 0 auto}`}
  html(){return `<svg width="8" height="4"><path d="M0 4h8L4 0z" fill="#999"/></svg><i></i><svg width="8" height="4"><path d="M0 0h8L4 4z" fill="#505050"/></svg>`}
}
customElements.define('page-scrollbar',PageScrollbar);
class TradePage extends Base{
  css(){return `:host{flex:1;background:#f7f6f2;overflow:hidden}.w{width:1000px;margin:20px auto 0;display:flex;height:400px}`}
  html(){return `<site-topbar></site-topbar><site-header></site-header><site-nav></site-nav><site-stats></site-stats><div class="w"><chart-panel></chart-panel><chat-panel></chat-panel></div>`}
}
customElements.define('trade-page',TradePage);
class DesktopShell extends Base{
  css(){return `:host{width:1366px;height:768px;overflow:hidden;position:relative;display:flex;flex-direction:column}.row{display:flex;flex:1;min-height:0}.b{width:1307px;display:flex;flex-direction:column}.v{display:flex;flex:1;min-height:0}`}
  html(){return `<top-panel></top-panel><div class="row"><launcher-bar></launcher-bar><div class="b"><tab-strip></tab-strip><tool-bar></tool-bar><bookmark-bar></bookmark-bar><div class="v"><trade-page></trade-page><page-scrollbar></page-scrollbar></div></div></div><contact-buttons></contact-buttons>`}
}
customElements.define('desktop-shell',DesktopShell);
</script>
</body>
</html>
